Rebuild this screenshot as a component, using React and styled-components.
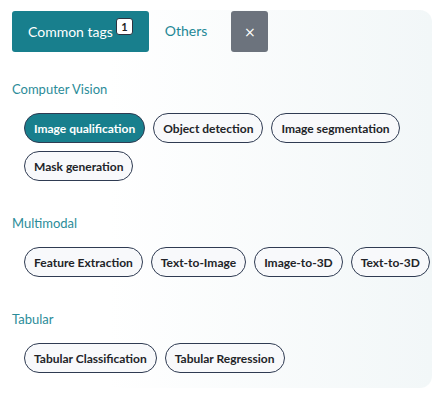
import React from 'react';
import styled, { createGlobalStyle } from 'styled-components';

const GlobalStyle = createGlobalStyle`
  body {
    margin: 0;
    background: #ffffff;
    font-family: Lato, "Liberation Sans", sans-serif;
  }
`;

const groups = [
  {
    title: 'Computer Vision',
    tags: ['Image qualification', 'Object detection', 'Image segmentation', 'Mask generation'],
  },
  {
    title: 'Multimodal',
    tags: ['Feature Extraction', 'Text-to-Image', 'Image-to-3D', 'Text-to-3D'],
  },
  {
    title: 'Tabular',
    tags: ['Tabular Classification', 'Tabular Regression'],
  },
];

const App = () => {
  return (
    <>
      <GlobalStyle />
      <Panel>
        <TabBar>
          <Tab active>
            Common tags
            <Badge>1</Badge>
          </Tab>
          <Tab>Others</Tab>
          <CloseButton aria-label="close">×</CloseButton>
        </TabBar>
        {groups.map((g) => (
          <Section key={g.title}>
            <SectionTitle>{g.title}</SectionTitle>
            <ChipList>
              {g.tags.map((t) => (
                <Chip key={t} selected={t === 'Image qualification'}>
                  {t}
                </Chip>
              ))}
            </ChipList>
          </Section>
        ))}
      </Panel>
    </>
  );
};

export default App;

const Panel = styled.div`
  margin: 10px 5px 0 0;
  height: 378px;
  box-sizing: border-box;
  padding: 1px 0 0 12px;
  border-radius: 0 12px 12px 0;
  background: linear-gradient(to right, #ffffff 25%, #f2f7f8 100%);
`;

const TabBar = styled.div`
  display: flex;
  align-items: stretch;
  height: 41px;
`;

const Tab = styled.button`
  display: flex;
  align-items: center;
  gap: 3px;
  padding: 0 16px;
  border: none;
  border-radius: 3px;
  font-family: inherit;
  font-size: 14px;
  cursor: pointer;
  background: ${(p) => (p.active ? '#187f8d' : 'transparent')};
  color: ${(p) => (p.active ? '#ffffff' : '#1f8896')};
  ${(p) => !p.active && 'padding-bottom: 3px;'}
`;

const Badge = styled.span`
  display: inline-flex;
  align-items: center;
  justify-content: center;
  width: 17px;
  height: 17px;
  box-sizing: border-box;
  margin-top: -10px;
  border: 1px solid #2d3340;
  border-radius: 3px;
  background: #ffffff;
  color: #222;
  font-size: 11px;
  font-weight: 700;
`;

const CloseButton = styled.button`
  width: 37px;
  margin-left: 8px;
  padding: 0;
  border: none;
  border-radius: 3px;
  background: #6c737d;
  color: #ffffff;
  font-size: 14px;
  font-family: "DejaVu Sans", sans-serif;
  cursor: pointer;
`;

const Section = styled.section`
  margin-top: 29px;
  & + & {
    margin-top: 34px;
  }
`;

const SectionTitle = styled.div`
  font-size: 13px;
  line-height: 16px;
  color: #2b8c99;
`;

const ChipList = styled.div`
  display: flex;
  flex-wrap: wrap;
  gap: 8px;
  margin-top: 16px;
  padding-left: 12px;
`;

const Chip = styled.span`
  display: inline-flex;
  align-items: center;
  height: 30px;
  box-sizing: border-box;
  padding: 0 9px;
  border: 1px solid #2f3b52;
  border-radius: 15px;
  font-size: 12px;
  font-weight: 700;
  background: ${(p) => (p.selected ? '#187f8d' : '#f8f9fb')};
  color: ${(p) => (p.selected ? '#ffffff' : '#222428')};
`;
